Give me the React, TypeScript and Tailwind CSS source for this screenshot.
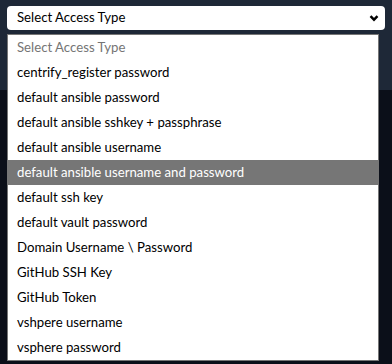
const options = [
  'centrify_register password',
  'default ansible password',
  'default ansible sshkey + passphrase',
  'default ansible username',
  'default ansible username and password',
  'default ssh key',
  'default vault password',
  'Domain Username \\ Password',
  'GitHub SSH Key',
  'GitHub Token',
  'vshpere username',
  'vsphere password',
];

export default function App() {
  const active = 'default ansible username and password';

  return (
    <div className="relative h-[364px] w-[392px] overflow-hidden bg-[#0b0f19] font-['Segoe_UI','Lato',sans-serif] text-[13.2px]">
      {/* header strip with the select */}
      <div className="h-[90px] bg-[#1e2837] px-[7px] pt-[6px]">
        <div className="flex h-[24px] items-center justify-between rounded-[4px] bg-white pl-[10px] pr-[6px] text-black">
          <span>Select Access Type</span>
          <svg className="h-[10px] w-[10px]" viewBox="0 0 10 10" fill="none" stroke="black" strokeWidth="2.4">
            <path d="M1.5 3.2L5 6.7l3.5-3.5" />
          </svg>
        </div>
      </div>

      {/* open listbox */}
      <ul className="absolute left-[7px] top-[34px] w-[372px] border border-[#767676] bg-white">
        <li className="flex h-[25px] items-center pl-[9px] pt-px text-[#757575]">Select Access Type</li>
        {options.map((opt) => (
          <li
            key={opt}
            className={`flex h-[25px] items-center pl-[9px] pt-px ${opt === active ? 'bg-[#767676] text-white' : 'text-black'}`}
          >
            {opt}
          </li>
        ))}
      </ul>
    </div>
  );
}
